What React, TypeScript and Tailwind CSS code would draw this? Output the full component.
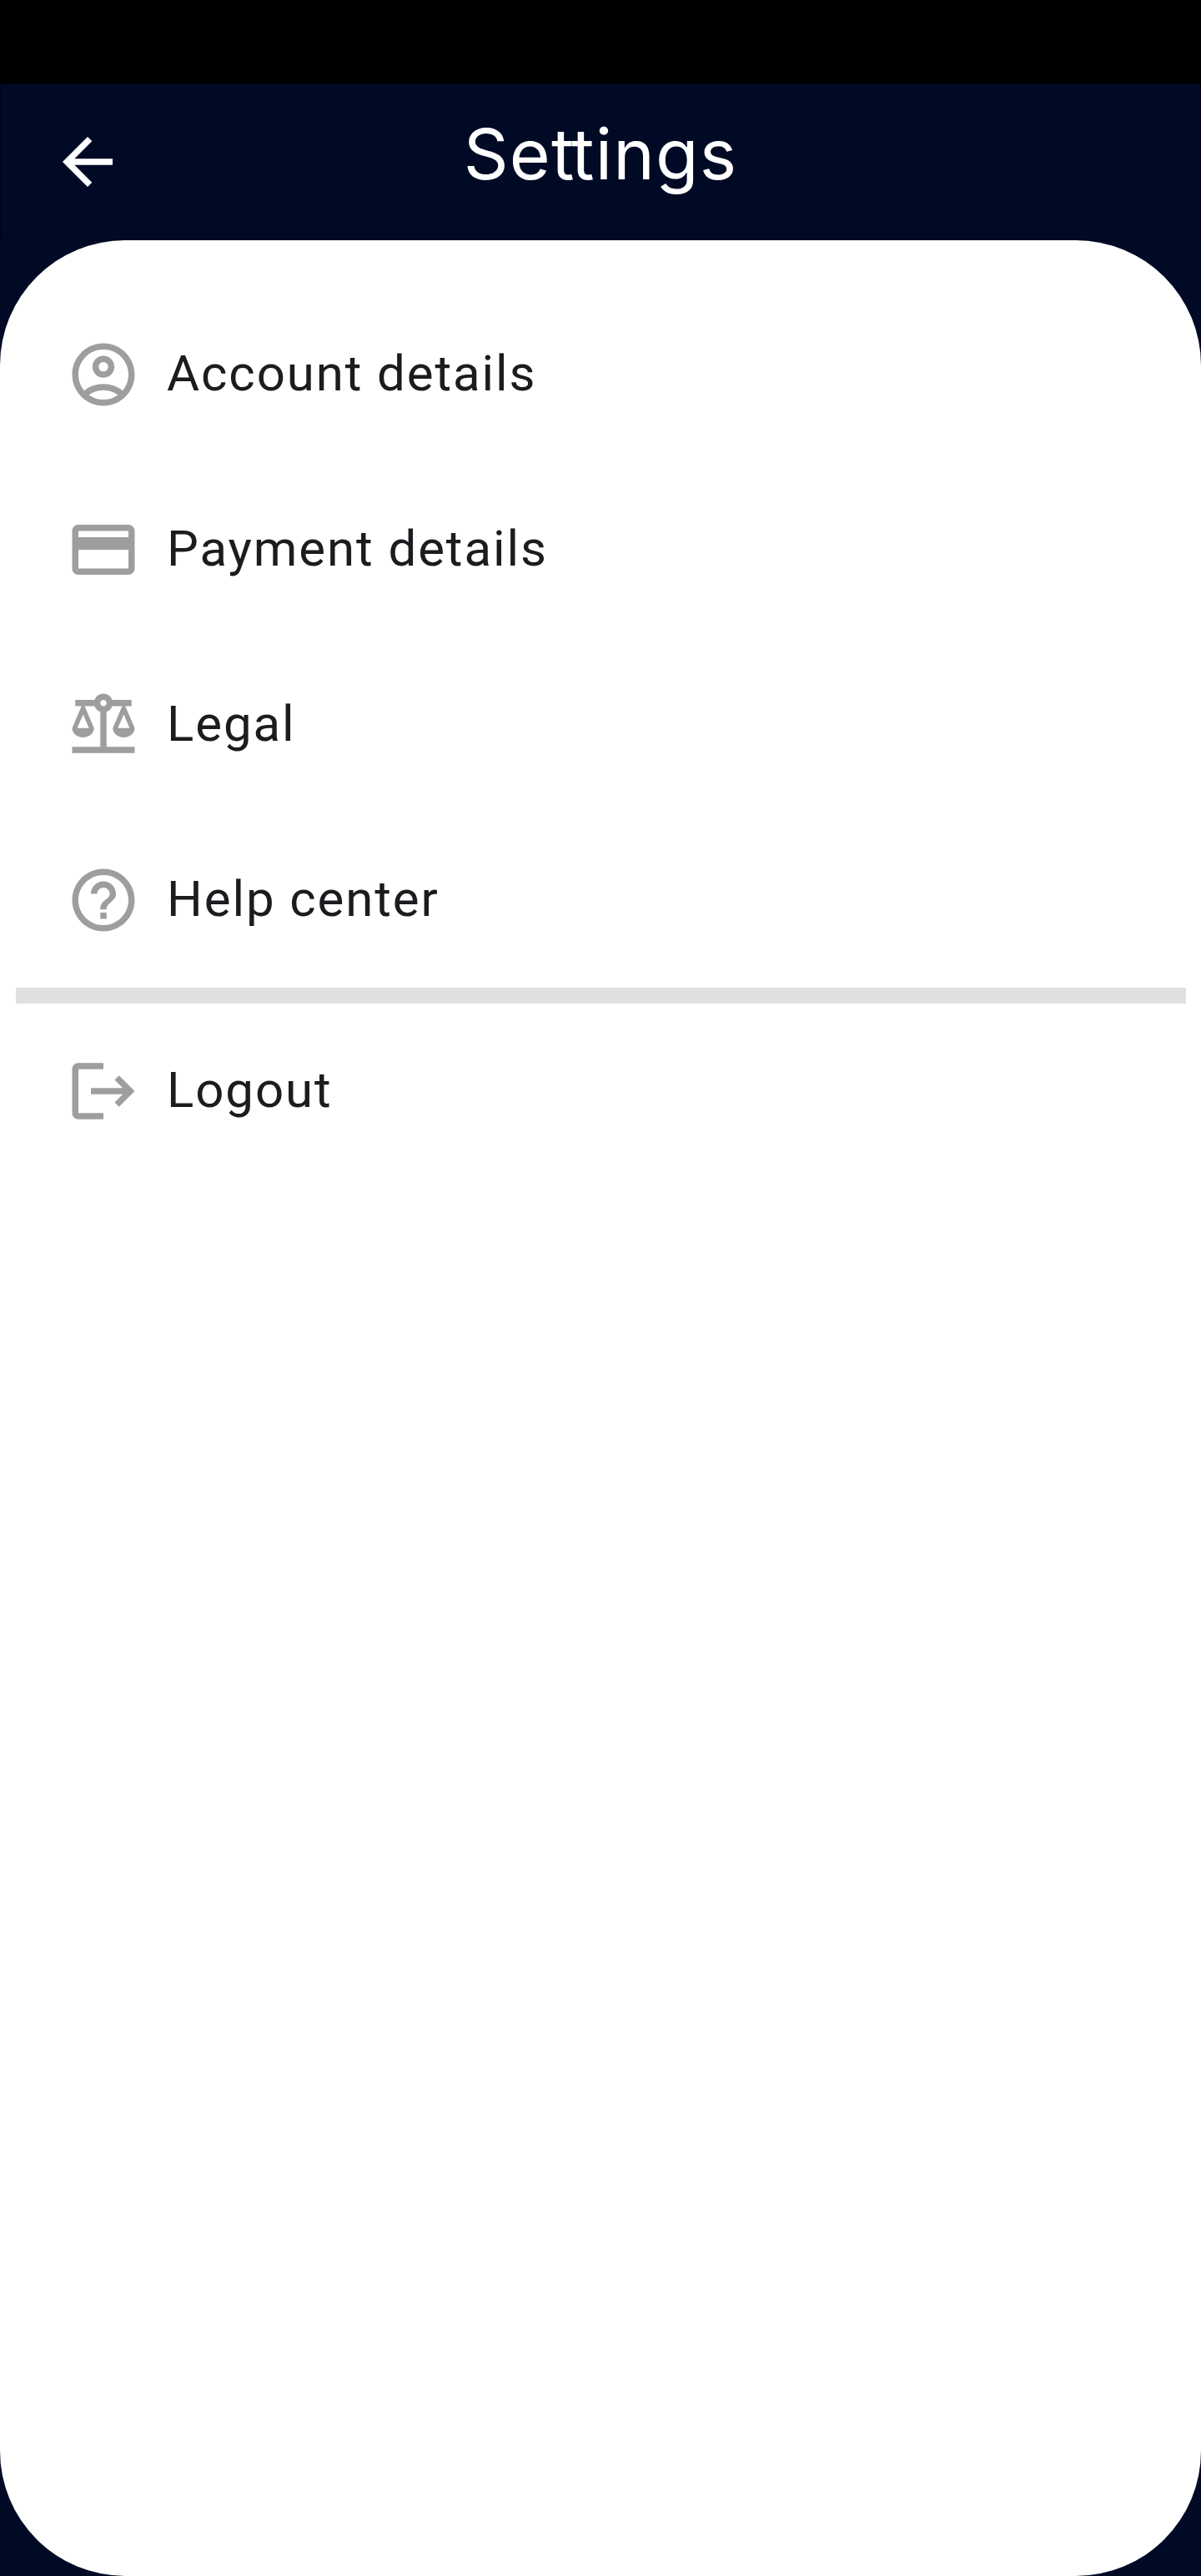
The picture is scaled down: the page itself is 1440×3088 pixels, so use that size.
const icons = {
  back: 'M20 11H7.83l5.59-5.59L12 4l-8 8 8 8 1.41-1.41L7.83 13H20v-2z',
  account:
    'M12 2C6.48 2 2 6.48 2 12s4.48 10 10 10 10-4.48 10-10S17.52 2 12 2zM7.35 18.5C8.66 17.56 10.26 17 12 17s3.34.56 4.65 1.5C15.34 19.44 13.74 20 12 20s-3.34-.56-4.65-1.5zm10.79-1.38C16.45 15.8 14.32 15 12 15s-4.45.8-6.14 2.12C4.7 15.73 4 13.95 4 12c0-4.42 3.58-8 8-8s8 3.58 8 8c0 1.95-.7 3.73-1.86 5.12zM12 6c-1.93 0-3.5 1.57-3.5 3.5S10.07 13 12 13s3.5-1.57 3.5-3.5S13.93 6 12 6zm0 5c-.83 0-1.5-.67-1.5-1.5S11.17 8 12 8s1.5.67 1.5 1.5S12.83 11 12 11z',
  payment:
    'M20 4H4c-1.11 0-1.99.89-1.99 2L2 18c0 1.11.89 2 2 2h16c1.11 0 2-.89 2-2V6c0-1.11-.89-2-2-2zm0 14H4v-6h16v6zm0-10H4V6h16v2z',
  legal:
    'M13 7.83c.85-.3 1.53-.98 1.83-1.83H18l-3 7c0 1.66 1.57 3 3.5 3s3.5-1.34 3.5-3l-3-7h2V4h-6.17c-.41-1.17-1.52-2-2.83-2s-2.42.83-2.83 2H3v2h2l-3 7c0 1.66 1.57 3 3.5 3S9 14.66 9 13L6 6h3.17c.3.85.98 1.53 1.83 1.83V19H2v2h20v-2h-9V7.83zM20.37 13h-3.74l1.87-4.36L20.37 13zm-13 0H3.63L5.5 8.64 7.37 13zM12 6c-.55 0-1-.45-1-1s.45-1 1-1 1 .45 1 1-.45 1-1 1z',
  help: 'M11 18h2v-2h-2v2zm1-16C6.48 2 2 6.48 2 12s4.48 10 10 10 10-4.48 10-10S17.52 2 12 2zm0 18c-4.41 0-8-3.59-8-8s3.59-8 8-8 8 3.59 8 8-3.59 8-8 8zm0-14c-2.21 0-4 1.79-4 4h2c0-1.1.9-2 2-2s2 .9 2 2c0 2-3 1.75-3 5h2c0-2.25 3-2.5 3-5 0-2.21-1.79-4-4-4z',
  logout:
    'M17 7l-1.41 1.41L18.17 11H8v2h10.17l-2.58 2.58L17 17l5-5zM4 5h8V3H4c-1.1 0-2 .9-2 2v14c0 1.1.9 2 2 2h8v-2H4V5z',
};

function Icon({ name }: { name: keyof typeof icons }) {
  return (
    <svg viewBox="0 0 24 24" fill="currentColor" className="size-[90px] shrink-0" aria-hidden="true">
      <path d={icons[name]} />
    </svg>
  );
}

function Row({ icon, label }: { icon: keyof typeof icons; label: string }) {
  return (
    <li className="flex h-[210px] items-center gap-[31px] pl-[79px] text-[#9e9e9e]">
      <Icon name={icon} />
      <span className="pb-[3px] font-[Roboto,sans-serif] text-[60px] leading-[90px] tracking-[1.9px] text-[#1c1b1f]">
        {label}
      </span>
    </li>
  );
}

export default function App() {
  return (
    <div className="flex h-[3088px] w-[1440px] flex-col bg-[#000a25]">
      <div className="h-[100px] bg-black" />
      <header className="grid h-[188px] grid-cols-[90px_1fr_90px] items-center border border-[#000214] px-[59px] text-white">
        <button type="button" aria-label="Back" className="size-[90px]">
          <Icon name="back" />
        </button>
        <h1 className="pb-[19px] text-center font-[Inter,sans-serif] text-[84px] leading-[100px] font-normal tracking-[1.2px]">
          Se<span className="tracking-[-3.5px]">t</span>tings
        </h1>
      </header>
      <main className="flex-1 rounded-[150px] bg-white pt-14">
        <ul>
          <Row icon="account" label="Account details" />
          <Row icon="payment" label="Payment details" />
          <Row icon="legal" label="Legal" />
          <Row icon="help" label="Help center" />
        </ul>
        <div className="mr-[18px] ml-[19px] h-[19px] bg-[#e0e0e0]" />
        <ul>
          <Row icon="logout" label="Logout" />
        </ul>
      </main>
    </div>
  );
}
